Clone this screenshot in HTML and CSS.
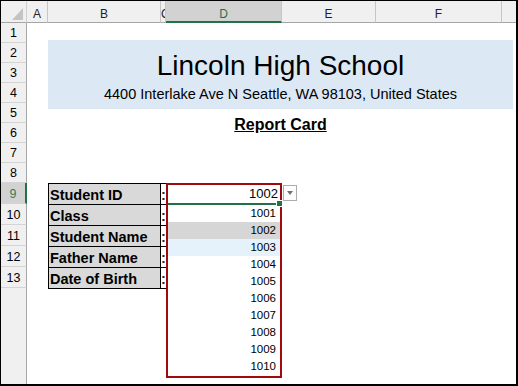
FILE: index.html
```html
<!DOCTYPE html>
<html lang="en">
<head>
    <meta charset="UTF-8">
    <meta name="viewport" content="width=device-width, initial-scale=1.0">
    <title>Report Card</title>
    <link rel="stylesheet" href="styles.css">
</head>
<body>
    <div class="window">
        <div class="col-heads">
            <div class="corner"><span class="corner-tri"></span></div>
            <div class="col-head col-a">A</div>
            <div class="col-head col-b">B</div>
            <div class="col-head col-c">C</div>
            <div class="col-head col-d active">D</div>
            <div class="col-head col-e">E</div>
            <div class="col-head col-f">F</div>
            <div class="col-head col-g"></div>
        </div>

        <div class="sheet-body">
            <div class="row-heads">
                <div class="row-head">1</div>
                <div class="row-head">2</div>
                <div class="row-head">3</div>
                <div class="row-head">4</div>
                <div class="row-head">5</div>
                <div class="row-head">6</div>
                <div class="row-head">7</div>
                <div class="row-head">8</div>
                <div class="row-head tall active">9</div>
                <div class="row-head tall">10</div>
                <div class="row-head tall">11</div>
                <div class="row-head tall">12</div>
                <div class="row-head tall">13</div>
                <div class="row-fill"></div>
            </div>

            <div class="sheet">
                <div class="banner">
                    <div class="school">Lincoln High School</div>
                    <div class="address">4400 Interlake Ave N Seattle, WA 98103, United States</div>
                </div>

                <div class="report-title"><span>Report Card</span></div>

                <div class="info">
                    <div class="info-row"><div class="info-label">Student ID</div><div class="info-colon">:</div></div>
                    <div class="info-row"><div class="info-label">Class</div><div class="info-colon">:</div></div>
                    <div class="info-row"><div class="info-label">Student Name</div><div class="info-colon">:</div></div>
                    <div class="info-row"><div class="info-label">Father Name</div><div class="info-colon">:</div></div>
                    <div class="info-row"><div class="info-label">Date of Birth</div><div class="info-colon">:</div></div>
                </div>

                <!-- open validation list on D9 -->
                <div class="dropdown">
                    <div class="dd-cell">1002</div>
                    <ul class="dd-list">
                        <li>1001</li>
                        <li class="selected">1002</li>
                        <li class="hover">1003</li>
                        <li>1004</li>
                        <li>1005</li>
                        <li>1006</li>
                        <li>1007</li>
                        <li>1008</li>
                        <li>1009</li>
                        <li>1010</li>
                    </ul>
                </div>
                <div class="dd-button"><span class="dd-arrow"></span></div>
            </div>
        </div>
    </div>
</body>
</html>
```

FILE: styles.css
```css
* {
    box-sizing: border-box;
}

body {
    margin: 0;
    background: #ffffff;
    font-family: "Liberation Sans", Arial, sans-serif;
    color: #000000;
}

.window {
    width: 518px;
    height: 386px;
    border: 1px solid #000000;
    border-right-width: 2px;
    border-bottom-width: 2px;
    display: flex;
    flex-direction: column;
    overflow: hidden;
}

/* column headers */
.col-heads {
    display: flex;
    height: 22px;
    background: #f0f0f0;
    font-size: 12px;
}

.corner {
    position: relative;
    width: 26px;
    border-right: 1px solid #d0d0d0;
    border-bottom: 1px solid #a6a6a6;
}

.corner-tri {
    position: absolute;
    right: 3px;
    bottom: 2px;
    width: 0;
    height: 0;
    border-left: 11px solid transparent;
    border-bottom: 12px solid #c4c4c4;
}

.col-head {
    border-right: 1px solid #c6c6c6;
    border-bottom: 1px solid #a6a6a6;
    text-align: center;
    padding-top: 6px;
    line-height: 15px;
    color: #222222;
    overflow: hidden;
    white-space: nowrap;
}

.col-a { width: 21px; }
.col-b { width: 113px; }
.col-c { width: 5px; text-align: left; padding-left: 0; }
.col-d { width: 116px; }
.col-e { width: 94px; }
.col-f { width: 126px; }
.col-g { flex: 1; border-right: none; }

.col-head.active {
    background: #d2d2d2;
    color: #217346;
    border-bottom: 2px solid #217346;
}

/* row headers */
.sheet-body {
    flex: 1;
    display: flex;
    min-height: 0;
}

.row-heads {
    width: 26px;
    display: flex;
    flex-direction: column;
    background: #f0f0f0;
    font-size: 12.5px;
}

.row-head {
    height: 20px;
    line-height: 21px;
    text-align: center;
    border-bottom: 1px solid #d4d4d4;
    border-right: 1px solid #a6a6a6;
    overflow: hidden;
}

.row-head.tall {
    height: 21px;
    line-height: 22px;
}

.row-head.active {
    background: #d2d2d2;
    color: #3b7a57;
    border-right: 2px solid #217346;
}

.row-fill {
    flex: 1;
    border-right: 1px solid #a6a6a6;
}

/* worksheet */
.sheet {
    position: relative;
    flex: 1;
}

.banner {
    margin: 17px 0 0 21px;
    width: 465px;
    height: 69px;
    padding-top: 10px;
    background: #dde8f5;
    text-align: center;
}

.school {
    font-size: 28px;
    line-height: 32px;
}

.address {
    margin-top: 3px;
    font-size: 14.5px;
    line-height: 18px;
}

.report-title {
    margin: 6px 0 0 21px;
    width: 465px;
    text-align: center;
    font-size: 16px;
    font-weight: bold;
    line-height: 20px;
}

.report-title span {
    text-decoration: underline;
}

.info {
    margin: 48px 0 0 21px;
    width: 118px;
    border-top: 1px solid #000000;
}

.info-row {
    display: flex;
    height: 21px;
    border-bottom: 1px solid #000000;
    font-size: 14.5px;
    font-weight: bold;
    line-height: 20px;
}

.info-label {
    width: 113px;
    padding: 1px 0 0 1px;
    background: #d9d9d9;
    border-left: 1px solid #000000;
    border-right: 1px solid #000000;
    white-space: nowrap;
}

.info-colon {
    width: 5px;
    padding-top: 1px;
    color: #1f2a44;
}

/* data validation list */
.dropdown {
    position: absolute;
    left: 139px;
    top: 160px;
    width: 116px;
    height: 195px;
    border: 2px solid #a00a0a;
    background: #ffffff;
}

.dd-cell {
    position: relative;
    height: 20px;
    padding-right: 2px;
    text-align: right;
    font-size: 13px;
    line-height: 18px;
    border-bottom: 2px solid #217346;
}

.dd-cell::after {
    content: "";
    position: absolute;
    right: -3px;
    bottom: -4px;
    width: 5px;
    height: 5px;
    background: #217346;
    border: 1px solid #ffffff;
}

.dd-list {
    list-style: none;
    margin: 0;
    padding: 0;
}

.dd-list li {
    height: 17px;
    line-height: 17px;
    padding-right: 4px;
    text-align: right;
    font-size: 11.5px;
}

.dd-list li.selected {
    background: #d6d6d6;
}

.dd-list li.hover {
    background: #e5f1fb;
}

.dd-button {
    position: absolute;
    left: 256px;
    top: 162px;
    width: 14px;
    height: 16px;
    border: 1px solid #acacac;
    background: #fdfdfd;
    display: flex;
    align-items: center;
    justify-content: center;
}

.dd-arrow {
    width: 0;
    height: 0;
    border-left: 3.5px solid transparent;
    border-right: 3.5px solid transparent;
    border-top: 4px solid #707070;
}
```
